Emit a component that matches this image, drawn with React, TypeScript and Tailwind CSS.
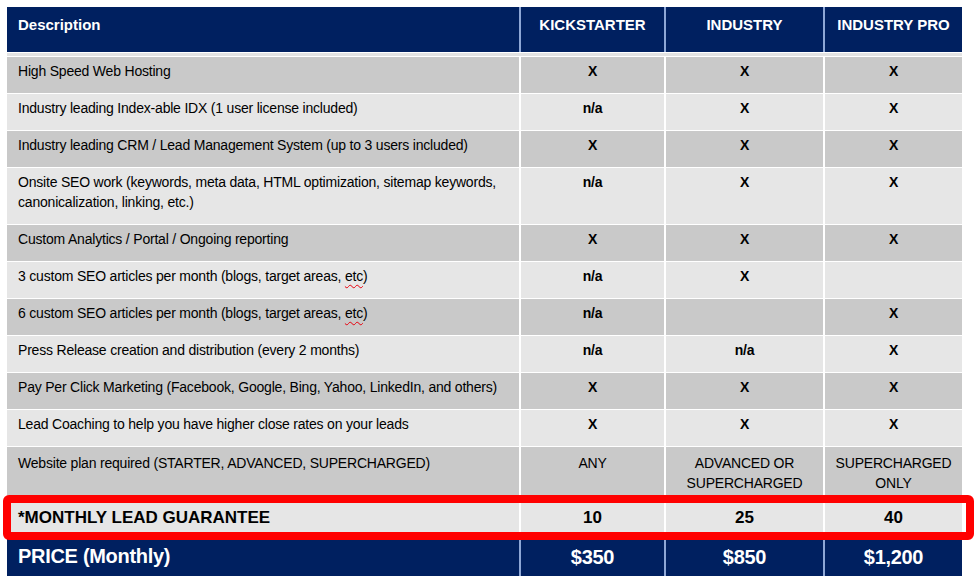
import React from "react";

type Row = {
  desc: React.ReactNode;
  k: string;
  i: string;
  p: string;
  h: string;
};

const cols = "grid grid-cols-[512px_143px_157px_137px] gap-x-[2px]";

const Etc: React.FC = () => (
  <span className="underline decoration-wavy decoration-red-600 decoration-[1px] underline-offset-[3px]">
    etc
  </span>
);

const rows: Row[] = [
  { desc: "High Speed Web Hosting", k: "X", i: "X", p: "X", h: "h-[36px]" },
  { desc: "Industry leading Index-able IDX (1 user license included)", k: "n/a", i: "X", p: "X", h: "h-[36px]" },
  { desc: "Industry leading CRM / Lead Management System (up to 3 users included)", k: "X", i: "X", p: "X", h: "h-[36px]" },
  {
    desc: "Onsite SEO work (keywords, meta data, HTML optimization, sitemap keywords, canonicalization, linking, etc.)",
    k: "n/a",
    i: "X",
    p: "X",
    h: "h-[56px]",
  },
  { desc: "Custom Analytics / Portal / Ongoing reporting", k: "X", i: "X", p: "X", h: "h-[36px]" },
  {
    desc: (
      <>
        3 custom SEO articles per month (blogs, target areas, <Etc />)
      </>
    ),
    k: "n/a",
    i: "X",
    p: "",
    h: "h-[36px]",
  },
  {
    desc: (
      <>
        6 custom SEO articles per month (blogs, target areas, <Etc />)
      </>
    ),
    k: "n/a",
    i: "",
    p: "X",
    h: "h-[36px]",
  },
  { desc: "Press Release creation and distribution (every 2 months)", k: "n/a", i: "n/a", p: "X", h: "h-[36px]" },
  {
    desc: "Pay Per Click Marketing (Facebook, Google, Bing, Yahoo, LinkedIn, and others)",
    k: "X",
    i: "X",
    p: "X",
    h: "h-[36px]",
  },
  { desc: "Lead Coaching to help you have higher close rates on your leads", k: "X", i: "X", p: "X", h: "h-[36px]" },
];

const App: React.FC = () => {
  return (
    <div className="w-[979px] h-[582px] bg-white pt-[7px] pl-[7px] font-['Liberation_Sans',Arial,sans-serif] text-black">
      <div className="w-[955px] flex flex-col gap-y-[1px] bg-white">
        {/* header */}
        <div className={`${cols} bg-[#8ea7d6] h-[45px] text-white font-bold text-[15px] leading-[20px]`}>
          <div className="bg-[#002060] pl-[11px] pt-[8px]">Description</div>
          <div className="bg-[#002060] text-center pt-[8px]">KICKSTARTER</div>
          <div className="bg-[#002060] text-center pt-[8px]">INDUSTRY</div>
          <div className="bg-[#002060] text-center pt-[8px]">INDUSTRY PRO</div>
        </div>
        <div className="h-[3px] bg-[#e3e3e3]" />

        {rows.map((r, idx) => {
          const bg = idx % 2 === 0 ? "bg-[#c9c9c9]" : "bg-[#e6e6e6]";
          return (
            <div key={idx} className={`${cols} ${r.h} text-[14px] leading-[20px] tracking-[-0.2px]`}>
              <div className={`${bg} pl-[11px] pr-[8px] pt-[4px]`}>{r.desc}</div>
              <div className={`${bg} text-center font-bold pt-[4px]`}>{r.k}</div>
              <div className={`${bg} text-center font-bold pt-[4px]`}>{r.i}</div>
              <div className={`${bg} text-center font-bold pt-[4px]`}>{r.p}</div>
            </div>
          );
        })}

        <div className={`${cols} h-[52px] text-[14px] leading-[20px] tracking-[-0.2px]`}>
          <div className="bg-[#c9c9c9] pl-[11px] pt-[6px]">
            Website plan required (STARTER, ADVANCED, SUPERCHARGED)
          </div>
          <div className="bg-[#c9c9c9] text-center pt-[6px]">ANY</div>
          <div className="bg-[#c9c9c9] text-center pt-[6px]">
            ADVANCED OR
            <br />
            SUPERCHARGED
          </div>
          <div className="bg-[#c9c9c9] text-center pt-[6px]">
            SUPERCHARGED
            <br />
            ONLY
          </div>
        </div>

        {/* lead guarantee, with the red highlight box over it */}
        <div className="relative">
          <div className={`${cols} h-[38px] text-[17px] leading-[22px] font-bold`}>
            <div className="bg-[#e6e6e6] pl-[11px] pt-[7px]">*MONTHLY LEAD GUARANTEE</div>
            <div className="bg-[#e6e6e6] text-center pt-[7px]">10</div>
            <div className="bg-[#e6e6e6] text-center pt-[7px]">25</div>
            <div className="bg-[#e6e6e6] text-center pt-[7px]">40</div>
          </div>
          <div className="absolute -left-[4px] -right-[12px] -top-[5px] -bottom-[2px] border-[8px] border-[#ff0000] rounded-[6px]" />
        </div>

        <div className={`${cols} bg-[#8ea7d6] h-[37px] text-white font-bold`}>
          <div className="bg-[#002060] pl-[11px] pt-[5px] text-[20px] leading-[24px] tracking-[-0.3px]">
            PRICE (Monthly)
          </div>
          <div className="bg-[#002060] text-center pt-[6px] text-[20px] leading-[24px] tracking-[-0.3px]">$350</div>
          <div className="bg-[#002060] text-center pt-[6px] text-[20px] leading-[24px] tracking-[-0.3px]">$850</div>
          <div className="bg-[#002060] text-center pt-[6px] text-[20px] leading-[24px] tracking-[-0.3px]">$1,200</div>
        </div>
      </div>
    </div>
  );
};

export default App;
